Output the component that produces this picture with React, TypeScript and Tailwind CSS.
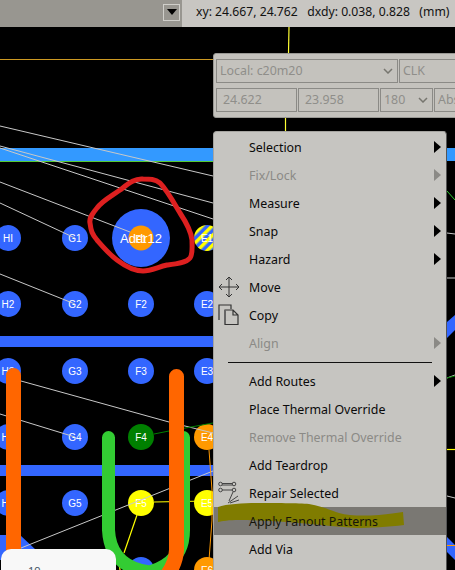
import React from "react";

const pads: [number, number, string, string][] = [
  [8, 238, "#3366ff", "HI"], [75, 238, "#3366ff", "G1"],
  [8, 304, "#3366ff", "H2"], [75, 304, "#3366ff", "G2"], [141, 304, "#3366ff", "F2"], [207, 304, "#3366ff", "E2"],
  [8, 371, "#3366ff", "H3"], [75, 371, "#3366ff", "G3"], [141, 371, "#3366ff", "F3"], [207, 371, "#3366ff", "E3"],
  [8, 437, "#3366ff", "H4"], [75, 437, "#3366ff", "G4"], [141, 437, "#008000", "F4"], [207, 437, "#ff9900", "E4"],
  [8, 503, "#3366ff", "H5"], [75, 503, "#3366ff", "G5"], [141, 503, "#ffff00", "F5"], [207, 503, "#ffff00", "E5"],
  [141, 570, "#3366ff", "F6"], [207, 570, "#ff9900", "E6"],
];

const rats = [
  "0,126 213,176", "0,146 213,203", "0,148 213,219", "0,182 130,232", "0,203 75,238", "0,274 75,304",
  "21,381 169,422 213,433", "0,414 75,437", "21,548 213,471",
  "447,233 455,234", "447,278 455,278", "447,378 455,375", "447,496 455,498",
];

function Canvas() {
  return (
    <svg viewBox="0 27 455 543" className="block w-full h-full" style={{ fontFamily: "'Liberation Sans', sans-serif" }}>
      <defs>
        <pattern id="st" width="7" height="7" patternUnits="userSpaceOnUse" patternTransform="rotate(-45)">
          <rect width="7" height="7" fill="#3366ff" />
          <rect width="7" height="3.5" fill="#ffff00" />
        </pattern>
      </defs>
      <line x1="0" y1="59.5" x2="214" y2="59.5" stroke="#cc9922" strokeWidth="1" />
      <rect x="0" y="148" width="455" height="13" fill="#3399ff" />
      <line x1="0" y1="161.5" x2="214" y2="161.5" stroke="#55cc33" strokeWidth="1" />
      <rect x="0" y="336" width="213" height="11" fill="#3366ff" />
      <rect x="0" y="465" width="213" height="11" fill="#3366ff" />
      <polygon points="0,535 20,535 36,550 36,560 0,560" fill="#3366ff" />
      <polygon points="447,322 455,315 455,330 447,338" fill="#3366ff" />
      <polygon points="447,537 455,545 455,560 447,552" fill="#3366ff" />
      <polyline points="289,27 288.5,53" stroke="#ffff33" strokeWidth="1.2" fill="none" />
      <polyline points="285.5,117 285.5,131" stroke="#ffff33" strokeWidth="1.2" fill="none" />
      <circle cx="141" cy="238" r="29" fill="#3366ff" />
      <circle cx="141" cy="238" r="12.5" fill="#ff9900" />
      <circle cx="207" cy="238" r="13" fill="url(#st)" />
      {pads.map(([x, y, c, t]) => (
        <g key={t}>
          <circle cx={x} cy={y} r="13" fill={c} />
          <text x={x} y={y + 3.5} textAnchor="middle" fontSize="10" fill="#fff">{t}</text>
        </g>
      ))}
      <text x="141" y="243" textAnchor="middle" fontSize="10" fill="#fff">F1</text>
      <text x="141" y="243" textAnchor="middle" fontSize="13" fill="#fff">Addr12</text>
      <text x="207" y="242" textAnchor="middle" fontSize="10" fill="#fff">E1</text>
      {rats.map((p) => (
        <polyline key={p} points={p} stroke="#c8c8c8" strokeWidth="1" fill="none" />
      ))}
      <polyline points="154,434 169,431 213,423" stroke="#008000" strokeWidth="1" fill="none" />
      <polyline points="447,191 455,200" stroke="#33cc33" strokeWidth="1" fill="none" />
      <polyline points="447,378 455,376" stroke="#008000" strokeWidth="1" fill="none" />
      <polyline points="154,502 207,501" stroke="#ffff00" strokeWidth="1.2" fill="none" />
      <polyline points="137,515 124,553" stroke="#ffff00" strokeWidth="1.2" fill="none" />
      <polyline points="119,562 120,570" stroke="#ffff00" strokeWidth="1.2" fill="none" />
      <polyline points="447,449.5 455,449.5" stroke="#ffff00" strokeWidth="1.2" fill="none" />
      <polyline points="447,545.5 455,545.5" stroke="#ff9900" strokeWidth="1" fill="none" />
      <polyline points="209,450 212,490 212,520 209,560" stroke="#ff9900" strokeWidth="1" fill="none" />
      <path d="M108.5 437.5 V530 Q110 562 140 570 L150 572 Q183.5 562 183.5 530 V437.5" fill="none" stroke="#33cc33" strokeWidth="13" strokeLinecap="round" />
      <path d="M13.5 375.5 V570" fill="none" stroke="#ff6600" strokeWidth="15" strokeLinecap="round" />
      <path d="M176.5 376.5 V550 Q176 562 168 574" fill="none" stroke="#ff6600" strokeWidth="15" strokeLinecap="round" />
      <path
        d="M143 179 C135 178 128 184 120 190 C110 197 102 201 97 208 C92 214 89 218 90 223 C91 231 92 234 97 240 C104 248 110 255 117 260 C125 266 134 271 143 271 C151 271 158 267 167 265 C176 264 186 263 190 258 C193 254 192 247 192 240 C191 231 186 222 180 213 C174 203 167 190 160 183 C155 179 150 179 143 179 Z"
        fill="none" stroke="#dd2020" strokeWidth="5"
      />
    </svg>
  );
}

const Tri = ({ dim }: { dim?: boolean }) => (
  <svg width="7" height="12" viewBox="0 0 7 12" className="absolute left-[220px] top-[8px]">
    <polygon points="0,0 7,6 0,12" fill={dim ? "#8b8a86" : "#000"} />
  </svg>
);

function Row({ label, dim, arrow, children }: { label: string; dim?: boolean; arrow?: boolean; children?: React.ReactNode }) {
  return (
    <div className={`relative h-[28px] pl-[35px] pt-[2px] flex items-center ${dim ? "text-[#8b8a86]" : "text-[#0a0a0a]"}`}>
      {children}
      <span>{label}</span>
      {arrow && <Tri dim={dim} />}
    </div>
  );
}

const MoveIcon = () => (
  <svg width="22" height="22" viewBox="0 0 22 22" className="absolute left-[4px] top-[3px]" fill="none" stroke="#333" strokeWidth="1">
    <path d="M11 1 V21 M1 11 H21 M8 4 L11 1 L14 4 M8 18 L11 21 L14 18 M4 8 L1 11 L4 14 M18 8 L21 11 L18 14" />
  </svg>
);
const CopyIcon = () => (
  <svg width="22" height="22" viewBox="0 0 22 22" className="absolute left-[4px] top-[3px]" fill="none" stroke="#333" strokeWidth="1.2">
    <path d="M1 16 V1 H13 V5" />
    <path d="M7 6 H15 L20 11 V20.5 H7 Z M15 6 V11 H20" fill="#c6c5c1" />
    <path d="M7 6 V20" stroke="#666" strokeWidth="2" />
  </svg>
);
const RepairIcon = () => (
  <svg width="24" height="24" viewBox="0 0 24 24" className="absolute left-[4px] top-[1px]" fill="none" stroke="#444" strokeWidth="1">
    <circle cx="2.5" cy="4" r="1.8" /><circle cx="16" cy="4" r="1.8" />
    <circle cx="2.5" cy="10" r="1.8" /><circle cx="16" cy="10" r="1.8" />
    <path d="M4 3.5 H14.5 M4 10 H14.5 M4 5 L14.5 5 M15 12 L11 21" />
    <path d="M10 23 L20 16 M12 23 L21 20" />
  </svg>
);

function Field({ w, children, arrow }: { w: string; children: React.ReactNode; arrow?: boolean }) {
  return (
    <div className={`${w} h-[24px] shrink-0 border border-[#8b8a86] flex items-center justify-between pl-[3px] pr-[3px] text-[#8f8e8a] overflow-hidden whitespace-nowrap`}>
      <span>{children}</span>
      {arrow && (
        <svg width="10" height="6" viewBox="0 0 10 6" className="shrink-0 mr-[1px]">
          <path d="M1 1 L5 5 L9 1" fill="none" stroke="#77766f" strokeWidth="1.5" />
        </svg>
      )}
    </div>
  );
}

export default function App() {
  return (
    <div
      className="relative w-[455px] h-[570px] overflow-hidden bg-black flex flex-col text-[12.4px]"
      style={{ fontFamily: "'Noto Sans', 'Open Sans', sans-serif" }}
    >
      <div className="h-[27px] shrink-0 flex bg-[#c8c6c2]">
        <div className="w-[182px] bg-[#989690] flex items-center justify-end pr-[2px]">
          <div className="w-[17px] h-[17px] border border-[#d0cfca] flex items-center justify-center mb-[3px]">
            <svg width="10" height="6" viewBox="0 0 10 6"><polygon points="0,0 10,0 5,6" fill="#000" /></svg>
          </div>
        </div>
        <div className="pl-[14px] flex items-center text-[12.2px] text-[#111] whitespace-pre mb-[2px]">xy: 24.667, 24.762   dxdy: 0.038, 0.828   (mm)</div>
      </div>
      <div className="relative flex-1 min-h-0">
        <Canvas />

        <div className="absolute left-[1px] top-[522px] w-[115px] h-[40px] rounded-[10px] bg-[#f8f8f8] pl-[27px] pt-[14px] text-[11px] text-[#456]">19</div>

        <div className="absolute left-[213px] top-[26px] w-[250px] h-[65px] bg-[#c4c2bd] border border-[#999894] rounded-[3px] pt-[5px] pl-[2px] flex flex-col gap-[5px]">
          <div className="flex gap-[1px]">
            <Field w="w-[182px]" arrow>Local: c20m20</Field>
            <Field w="w-[80px]">CLK</Field>
          </div>
          <div className="flex gap-[1px]">
            <Field w="w-[81px]"><span className="pl-[3px]">24.622</span></Field>
            <Field w="w-[81px]"><span className="pl-[3px]">23.958</span></Field>
            <Field w="w-[53px]" arrow>180</Field>
            <Field w="w-[40px]">Abs</Field>
          </div>
        </div>

        <div className="absolute left-[213px] top-[104px] w-[234px] h-[470px] bg-[#c6c5c1] border-t border-l border-[#a5a4a0] border-r border-r-[#555] rounded-t-[4px] pt-[1px]">
          <Row label="Selection" arrow />
          <Row label="Fix/Lock" dim arrow />
          <Row label="Measure" arrow />
          <Row label="Snap" arrow />
          <Row label="Hazard" arrow />
          <Row label="Move"><MoveIcon /></Row>
          <Row label="Copy"><CopyIcon /></Row>
          <Row label="Align" dim arrow />
          <div className="h-[10px] flex items-center pl-[14px]"><div className="w-[204px] h-px bg-[#111]" /></div>
          <Row label="Add Routes" arrow />
          <Row label="Place Thermal Override" />
          <Row label="Remove Thermal Override" dim />
          <Row label="Add Teardrop" />
          <Row label="Repair Selected"><RepairIcon /></Row>
          <div className="relative h-[28px] bg-[#7a7873] pl-[35px] pt-[2px] flex items-center text-[#15150a]">
            <span className="relative z-10">Apply Fanout Patterns</span>
          </div>
          <Row label="Add Via" />
          <svg viewBox="0 0 234 40" width="234" height="40" className="absolute left-0 top-[368px]">
            <path
              d="M4 7 C12 4 30 3 42 3 C60 3 85 3 95 4 C108 6 118 11 125 13 C135 16 150 16 165 15 C175 14 182 13 189 12 L190 25 C175 27 155 28 142 28 C125 27 110 25 85 23 C60 21 40 20 25 20 C15 20 8 21 4 22 Z"
              fill="#807c00"
            />
          </svg>
        </div>
      </div>
    </div>
  );
}
